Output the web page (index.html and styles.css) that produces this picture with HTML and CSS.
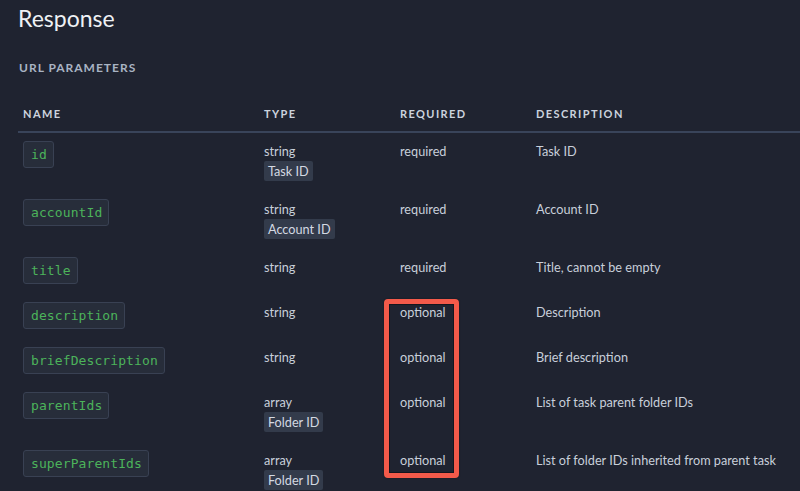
FILE: index.html
```html
<!DOCTYPE html>
<html lang="en">
<head>
<meta charset="utf-8">
<title>Response</title>
<link rel="stylesheet" href="styles.css">
</head>
<body>
<div class="page">
  <h1 class="title">Response</h1>
  <h2 class="section">URL PARAMETERS</h2>
  <table class="params">
    <thead>
      <tr>
        <th class="col-name">NAME</th>
        <th class="col-type">TYPE</th>
        <th class="col-req">REQUIRED</th>
        <th class="col-desc">DESCRIPTION</th>
      </tr>
    </thead>
    <tbody>
      <tr>
        <td><code class="pname">id</code></td>
        <td><div class="type">string</div><span class="badge">Task ID</span></td>
        <td>required</td>
        <td>Task ID</td>
      </tr>
      <tr>
        <td><code class="pname">accountId</code></td>
        <td><div class="type">string</div><span class="badge">Account ID</span></td>
        <td>required</td>
        <td>Account ID</td>
      </tr>
      <tr>
        <td><code class="pname">title</code></td>
        <td><div class="type">string</div></td>
        <td>required</td>
        <td>Title, cannot be empty</td>
      </tr>
      <tr>
        <td><code class="pname">description</code></td>
        <td><div class="type">string</div></td>
        <td>optional</td>
        <td>Description</td>
      </tr>
      <tr>
        <td><code class="pname">briefDescription</code></td>
        <td><div class="type">string</div></td>
        <td>optional</td>
        <td>Brief description</td>
      </tr>
      <tr>
        <td><code class="pname">parentIds</code></td>
        <td><div class="type">array</div><span class="badge">Folder ID</span></td>
        <td>optional</td>
        <td>List of task parent folder IDs</td>
      </tr>
      <tr>
        <td><code class="pname">superParentIds</code></td>
        <td><div class="type">array</div><span class="badge">Folder ID</span></td>
        <td>optional</td>
        <td>List of folder IDs inherited from parent task</td>
      </tr>
    </tbody>
  </table>
  <div class="highlight" aria-hidden="true"></div>
</div>
</body>
</html>
```

FILE: styles.css
```css
html, body {
  margin: 0;
  padding: 0;
  background: #1f2330;
  overflow: hidden;
}

body {
  font-family: Lato, "Open Sans", "Liberation Sans", sans-serif;
  color: #c6cdd8;
}

.page {
  position: relative;
  padding: 3px 0 0 18px;
  width: 782px;
  height: 488px;
}

.title {
  margin: 0;
  font-size: 23px;
  font-weight: 400;
  line-height: 30px;
  color: #eef1f5;
}

.section {
  margin: 27px 0 0 1px;
  font-size: 12px;
  font-weight: 700;
  line-height: 16px;
  letter-spacing: 1px;
  color: #a9b3c3;
}

.params {
  margin-top: 20px;
  width: 800px;
  border-collapse: collapse;
  table-layout: fixed;
}

.col-name { width: 231px; }
.col-type { width: 126px; }
.col-req { width: 126px; }

.params th {
  text-align: left;
  padding: 10px 5px 10px;
  font-size: 11px;
  font-weight: 700;
  line-height: 15px;
  letter-spacing: 1.4px;
  color: #ccd3de;
  border-bottom: 2px solid #39445a;
}

.params td {
  vertical-align: top;
  padding: 8px 5px 10px;
  font-size: 12.7px;
  line-height: 20px;
  color: #c8cfda;
}

.pname {
  display: inline-block;
  vertical-align: top;
  padding: 4px 6px 4px 7px;
  border: 1px solid #394153;
  border-radius: 3px;
  background: #272d3a;
  font-family: "DejaVu Sans Mono", "Liberation Mono", monospace;
  font-size: 13px;
  line-height: 17px;
  letter-spacing: 0.1px;
  color: #4cb35a;
}

.type {
  line-height: 20px;
}

.badge {
  display: inline-block;
  padding: 0 4px;
  line-height: 20px;
  border-radius: 2px;
  background: #333b4b;
  color: #d3d9e2;
}

.highlight {
  position: absolute;
  left: 384px;
  top: 299px;
  width: 65px;
  height: 169px;
  border: 5px solid #f35a4a;
  border-radius: 4px;
  box-shadow: inset 0 0 0 1px rgba(0, 0, 0, 0.35), 0 0 2px rgba(0, 0, 0, 0.4);
}
```
